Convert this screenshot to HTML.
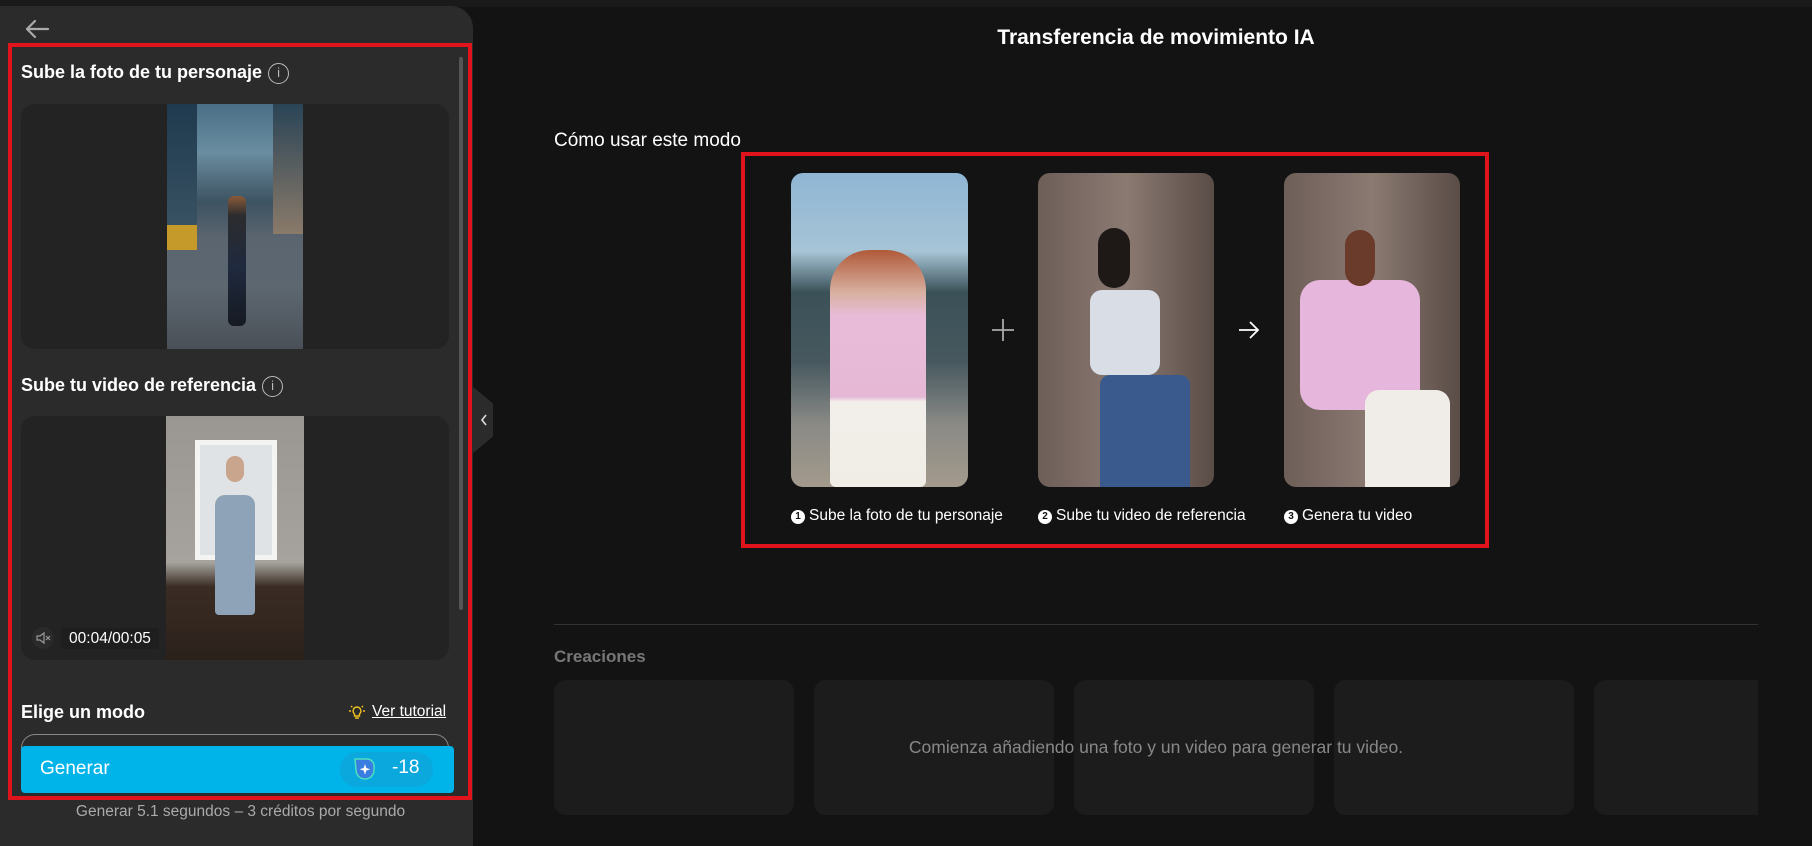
<!DOCTYPE html>
<html><head><meta charset="utf-8"><style>
*{margin:0;padding:0;box-sizing:border-box}
body{width:1812px;height:835px;background:#131313;font-family:"Liberation Sans",sans-serif;color:#fff;position:relative;overflow:hidden}
.a{position:absolute}
.topbar{left:0;top:0;width:1812px;height:7px;background:#1a1a1a}
.panel{left:0;top:6px;width:473px;height:840px;background:#2b2b2b;border-radius:0 22px 0 0}
.red{border:4px solid #e0141c}
.h{font-weight:bold;font-size:18px;color:#fff}
.card{background:#232323;border-radius:14px}
.info{display:inline-block;width:21px;height:21px;border:1.5px solid #bbb;border-radius:50%;color:#bbb;font-size:13px;text-align:center;line-height:18px;font-weight:normal;vertical-align:middle;margin-left:6px}
.ph{border-radius:12px;overflow:hidden}
.lbl{font-size:15.5px;color:#fff;white-space:nowrap}
.num{display:inline-block;width:14px;height:14px;border-radius:50%;background:#fff;color:#111;font-size:10px;text-align:center;line-height:14px;font-weight:bold;margin-right:4px;vertical-align:1px}
.cr{background:#1c1c1c;border-radius:12px;top:680px;height:135px;width:240px}
</style></head><body>
<div class="a topbar"></div>
<div class="a panel"></div>
<svg class="a" style="left:24px;top:18px" width="26" height="22" viewBox="0 0 26 22"><path d="M24 11H3M11 3L3 11l8 8" stroke="#aaa" stroke-width="2.2" fill="none" stroke-linecap="round" stroke-linejoin="round"/></svg>
<div class="a" style="left:459px;top:57px;width:4px;height:553px;background:#555;border-radius:2px"></div>
<div class="a h" style="left:21px;top:62px">Sube la foto de tu personaje<span class="info">i</span></div>
<div class="a card" style="left:21px;top:104px;width:428px;height:245px"></div>
<div class="a" style="left:167px;top:104px;width:136px;height:245px;background:linear-gradient(180deg,#4a6f86 0%,#6a8da0 20%,#3d5362 40%,#5b6570 55%,#5d6770 75%,#4a5058 100%)"></div>
<div class="a" style="left:167px;top:104px;width:30px;height:140px;background:linear-gradient(180deg,#1f3a4e,#3c5566)"></div>
<div class="a" style="left:273px;top:104px;width:30px;height:130px;background:linear-gradient(180deg,#2a4456,#8a7a6a)"></div>
<div class="a" style="left:167px;top:225px;width:30px;height:25px;background:#c59a2a"></div>
<div class="a" style="left:228px;top:196px;width:18px;height:130px;background:linear-gradient(180deg,#8a5a3a 0%,#2c2c2e 15%,#1f2a3e 55%,#161a22 100%);border-radius:6px"></div>
<div class="a h" style="left:21px;top:375px">Sube tu video de referencia<span class="info">i</span></div>
<div class="a card" style="left:21px;top:416px;width:428px;height:244px"></div>
<div class="a" style="left:166px;top:416px;width:138px;height:244px;background:linear-gradient(180deg,#9a9792 0%,#a6a39e 60%,#3a2c24 70%,#2b211b 100%)"></div>
<div class="a" style="left:195px;top:440px;width:82px;height:120px;background:#dfe3e5;border:5px solid #f4f4f2"></div>
<div class="a" style="left:215px;top:495px;width:40px;height:120px;background:#8ea2b8;border-radius:10px 10px 4px 4px"></div>
<div class="a" style="left:226px;top:456px;width:18px;height:26px;background:#c9a58e;border-radius:9px"></div>
<div class="a" style="left:32px;top:627px;width:22px;height:22px;border-radius:50%;background:#2a2a2a"></div>
<svg class="a" style="left:35px;top:631px" width="16" height="14" viewBox="0 0 16 14"><path d="M2 5h3l4-3v10l-4-3H2z" stroke="#999" stroke-width="1.2" fill="none"/><path d="M11 5l4 4M15 5l-4 4" stroke="#999" stroke-width="1.2"/></svg>
<div class="a" style="left:61px;top:628px;width:98px;height:21px;background:#1e1e1e;border-radius:3px;font-size:15.5px;line-height:21px;text-align:center">00:04/00:05</div>
<div class="a h" style="left:21px;top:702px">Elige un modo</div>
<svg class="a" style="left:348px;top:703px" width="18" height="18" viewBox="0 0 18 18"><path d="M9 4a4 4 0 0 0-2.5 7v2h5v-2A4 4 0 0 0 9 4zM7 15h4" stroke="#f0c020" stroke-width="1.4" fill="none"/><path d="M1 8h2M15 8h2M3 3l1.3 1.3M15 3l-1.3 1.3" stroke="#f0c020" stroke-width="1.4"/></svg>
<div class="a" style="left:372px;top:703px;font-size:15.5px;text-decoration:underline">Ver tutorial</div>
<div class="a" style="left:21px;top:734px;width:428px;height:30px;border:1px solid #888;border-bottom:none;border-radius:14px 14px 0 0"></div>
<div class="a" style="left:21px;top:746px;width:433px;height:47px;background:#00b3e8;border-radius:4px"></div>
<div class="a" style="left:40px;top:758px;font-size:19px;color:#fff">Generar</div>
<div class="a" style="left:340px;top:752px;width:93px;height:35px;border-radius:18px;background:#0aa8dc"></div>
<svg class="a" style="left:352px;top:757px" width="24" height="24" viewBox="0 0 24 24"><path d="M3 2h12a7 7 0 0 1 7 7v4a9 9 0 0 1-18 0z" fill="#3a7de0" stroke="#4ee0c0" stroke-width="1.5"/><path d="M13 7l1.3 4 4 1.3-4 1.3-1.3 4-1.3-4-4-1.3 4-1.3z" fill="#fff"/></svg>
<div class="a" style="left:392px;top:757px;font-size:19px">-18</div>
<div class="a red" style="left:8px;top:43px;width:464px;height:757px"></div>
<div class="a" style="left:4px;top:803px;width:473px;text-align:center;font-size:15.5px;color:#aaa">Generar 5.1 segundos – 3 créditos por segundo</div>
<div class="a" style="left:473px;top:387px;width:20px;height:66px;background:#2b2b2b;clip-path:polygon(0 0,100% 25%,100% 75%,0 100%)"></div>
<svg class="a" style="left:479px;top:413px" width="10" height="14" viewBox="0 0 10 14"><path d="M7 2L3 7l4 5" stroke="#ddd" stroke-width="1.6" fill="none"/></svg>

<div class="a" style="left:0;top:26px;width:2312px;text-align:center;font-size:21px;font-weight:bold">Transferencia de movimiento IA</div>
<div class="a" style="left:554px;top:130px;font-size:19px">Cómo usar este modo</div>
<div class="a red" style="left:741px;top:152px;width:748px;height:396px"></div>
<div class="a ph" style="left:791px;top:173px;width:177px;height:314px;background:linear-gradient(180deg,#8fb6d4 0%,#a6c4d6 25%,#3b5158 38%,#46585e 60%,#8a8a86 80%,#a39a8c 100%)"></div>
<div class="a" style="left:830px;top:250px;width:96px;height:237px;background:linear-gradient(180deg,#b05a3a 0%,#d8b0a0 18%,#e8bcd8 28%,#e6b8d6 62%,#f2efea 64%,#f0ede6 100%);border-radius:40px 40px 6px 6px"></div>
<div class="a ph" style="left:1038px;top:173px;width:176px;height:314px;background:linear-gradient(90deg,#6e5e58,#8a7a72 50%,#5a4c46)"></div>
<div class="a" style="left:1090px;top:290px;width:70px;height:85px;background:#d9dde6;border-radius:12px"></div>
<div class="a" style="left:1100px;top:375px;width:90px;height:112px;background:#3a5a8e;border-radius:10px 10px 0 0"></div>
<div class="a" style="left:1098px;top:228px;width:32px;height:60px;background:#1e1816;border-radius:16px"></div>
<div class="a ph" style="left:1284px;top:173px;width:176px;height:314px;background:linear-gradient(90deg,#6e5e58,#8a7a72 50%,#5a4c46)"></div>
<div class="a" style="left:1300px;top:280px;width:120px;height:130px;background:#e6b6dc;border-radius:20px"></div>
<div class="a" style="left:1365px;top:390px;width:85px;height:97px;background:#f0ece8;border-radius:14px 14px 0 0"></div>
<div class="a" style="left:1345px;top:230px;width:30px;height:56px;background:#6a3a2a;border-radius:15px"></div>
<svg class="a" style="left:991px;top:318px" width="24" height="24" viewBox="0 0 24 24"><path d="M12 1v22M1 12h22" stroke="#aaa" stroke-width="1.8"/></svg>
<svg class="a" style="left:1238px;top:320px" width="22" height="20" viewBox="0 0 22 20"><path d="M1 10h19M12 2l8 8-8 8" stroke="#fff" stroke-width="1.8" fill="none"/></svg>
<div class="a lbl" style="left:791px;top:507px"><span class="num">1</span>Sube la foto de tu personaje</div>
<div class="a lbl" style="left:1038px;top:507px"><span class="num">2</span>Sube tu video de referencia</div>
<div class="a lbl" style="left:1284px;top:507px"><span class="num">3</span>Genera tu video</div>

<div class="a" style="left:554px;top:624px;width:1204px;height:1px;background:#333"></div>
<div class="a" style="left:554px;top:647px;font-size:17px;font-weight:bold;color:#777">Creaciones</div>
<div class="a cr" style="left:554px"></div>
<div class="a cr" style="left:814px"></div>
<div class="a cr" style="left:1074px"></div>
<div class="a cr" style="left:1334px"></div>
<div class="a cr" style="left:1594px;width:164px;border-radius:12px 0 0 12px"></div>
<div class="a" style="left:554px;top:737px;width:1204px;text-align:center;font-size:17.5px;color:#888">Comienza añadiendo una foto y un video para generar tu video.</div>
</body></html>
